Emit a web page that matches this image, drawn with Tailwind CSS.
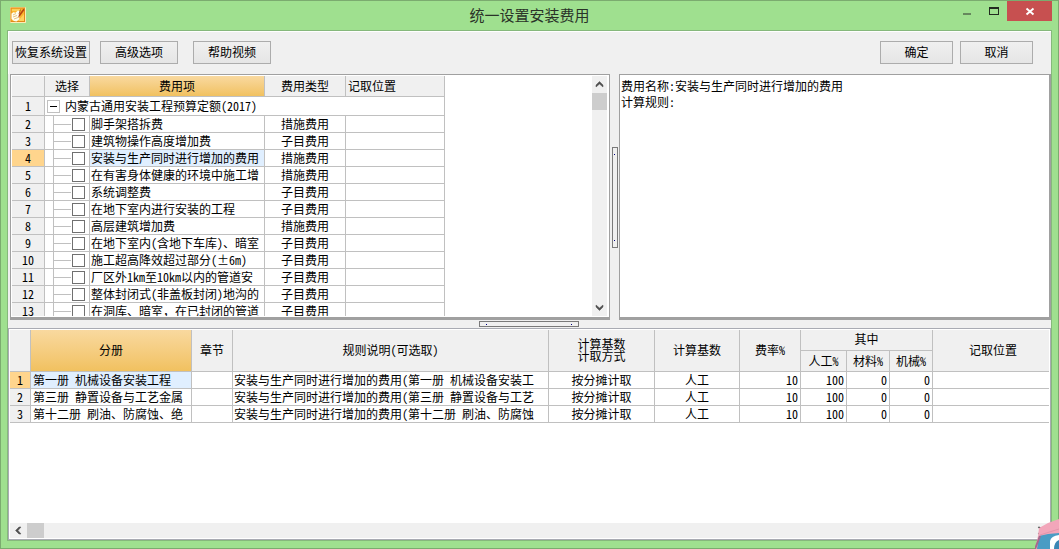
<!DOCTYPE html>
<html lang="zh-CN">
<head>
<meta charset="utf-8">
<meta name="viewport" content="width=device-width, initial-scale=1">
<title>统一设置安装费用</title>
<script src="https://cdn.jsdelivr.net/npm/@tailwindcss/browser@4"></script>
</head>
<body class="h-screen overflow-hidden bg-[#9fe08f] font-['Noto_Sans_Mono_CJK_SC','Noto_Sans_CJK_SC',sans-serif] text-[12px] leading-4 text-black">
<div class="relative flex h-screen flex-col border border-[#7bab6f] px-[6px] pb-[7px]">
  <header class="grid h-[29px] shrink-0 grid-cols-[1fr_auto_1fr] items-start">
    <svg class="mt-1.5 ml-[3px] size-4" viewBox="0 0 16 16" aria-hidden="true">
      <rect width="16" height="16" rx="1" fill="#fbe3a0"/>
      <rect x=".5" y=".5" width="14.500" height="14.500" fill="#e08a1c"/>
      <rect x="1.500" y="1.500" width="12.500" height="12.500" fill="#fbb52c"/>
      <path d="M2 2h9L9 4H2z" fill="#fbd05a"/>
      <path d="M9 13l5-6v7H8z" fill="#ffd25e"/>
      <path d="M1.500 6.500L4 5l1 1 3-2.500 2 1-.5 2.500 1 1-1.500 2 .5 2-3 2.500L4 14l-2.500-2z" fill="#fffdf0"/>
      <path d="M3 8l3-1.500M3 10l4-1.500M4 12l4-1.500" stroke="#d9a650" stroke-width=".7"/>
      <path d="M13.500 1.500L9 7.500 8 11l2.500-2.500L14.500 3z" fill="#b8460f"/>
      <path d="M10.500 2.500L9 7" stroke="#a04010" stroke-width=".8"/>
      <path d="M15.500 1v14.500H1" fill="none" stroke="#fdebb5"/>
    </svg>
    <h1 class="pt-1 text-[15px] leading-5 text-[#2a3328]">统一设置安装费用</h1>
    <div class="flex justify-end">
      <button aria-label="最小化" class="flex h-5 w-[27px] items-center justify-center"><svg class="h-5 w-[27px]" viewBox="0 0 27 20"><path d="M10 12h8v2h-8z" fill="#66885d"/></svg></button>
      <button aria-label="最大化" class="h-5 w-[27px]"><svg class="h-5 w-[27px]" viewBox="0 0 27 20"><path d="M9 6h10v8H9zM10 8v5h8V8z" fill="#222b20" fill-rule="evenodd"/></svg></button>
      <button aria-label="关闭" class="h-5 w-[45px] bg-[#c75050]"><svg class="h-5 w-[45px]" viewBox="0 0 45 20"><path d="M19.500 7.500l7 6M26.500 7.500l-7 6" stroke="#fff" stroke-width="1.900"/></svg></button>
    </div>
  </header>

  <main class="flex min-h-0 flex-1 flex-col border border-[#86b87c] bg-[#f0f0f0]">
    <div class="flex h-[43px] shrink-0 items-start border-t border-l border-white pt-[9px] pr-[18px] pl-[3px]">
      <button class="h-[23px] w-[78px] border border-[#acacac] bg-linear-to-b from-[#f0f0f0] to-[#e5e5e5] pb-0.5 whitespace-nowrap">恢复系统设置</button>
      <button class="ml-2.5 h-[23px] w-[78px] border border-[#acacac] bg-linear-to-b from-[#f0f0f0] to-[#e5e5e5] pb-0.5">高级选项</button>
      <button class="ml-[15px] h-[23px] w-[78px] border border-[#acacac] bg-linear-to-b from-[#f0f0f0] to-[#e5e5e5] pb-0.5">帮助视频</button>
      <button class="ml-auto h-[23px] w-[73px] border border-[#acacac] bg-linear-to-b from-[#f0f0f0] to-[#e5e5e5] pb-0.5">确定</button>
      <button class="ml-[7px] h-[23px] w-[73px] border border-[#acacac] bg-linear-to-b from-[#f0f0f0] to-[#e5e5e5] pb-0.5">取消</button>
    </div>

    <section class="flex h-[246px] shrink-0 pl-0.5">
      <div class="flex w-[600px] shrink-0 border border-b-3 border-[#a0a0a0] bg-white p-px">
        <div class="min-h-0 flex-1 overflow-hidden">
          <table class="table-fixed w-[433px] border-separate border-spacing-0 whitespace-nowrap">
            <colgroup><col class="w-[33px]"><col class="w-[45px]"><col class="w-[175px]"><col class="w-[81px]"><col class="w-[99px]"></colgroup>
            <thead>
              <tr class="h-[21px] bg-[#f0f0f0] *:border-r *:border-b *:border-[#c0c0c0] *:p-0 *:font-normal">
                <th></th><th>选择</th><th class="bg-linear-to-b from-[#f9d99f] to-[#f1c15f]">费用项</th><th>费用类型</th><th class="text-left"><span class="pl-0.5">记取位置</span></th>
              </tr>
            </thead>
            <tbody id="fees">
              <tr class="h-[19px] *:border-r *:border-b *:border-[#c0c0c0] *:p-0">
                <td class="bg-[#f0f0f0] text-center">1</td>
                <td colspan="4"><div class="flex items-center pl-0.5"><button aria-label="折叠" class="flex size-[13px] items-center justify-center border border-[#c0c0c0] bg-white"><span class="h-px w-[7px] bg-black"></span></button><span class="pl-[5px]">内蒙古通用安装工程预算定额(2017)</span></div></td>
              </tr>
            </tbody>
          </table>
        </div>
        <div class="flex w-[15px] flex-col bg-[#f0f0f0]">
          <button aria-label="向上滚动" class="h-[17px]"><svg class="h-[17px] w-[15px]" viewBox="0 0 15 17"><path d="M4 11V9l3.500-3.500L11 9v2L7.500 8z" fill="#505050" stroke="#505050" stroke-width=".5"/></svg></button>
          <div class="h-[17px] bg-[#cdcdcd]"></div>
          <button aria-label="向下滚动" class="mt-auto h-[17px]"><svg class="h-[17px] w-[15px]" viewBox="0 0 15 17"><path d="M4 6v2l3.500 3.500L11 8V6L7.500 9z" fill="#505050" stroke="#505050" stroke-width=".5"/></svg></button>
        </div>
        <div class="w-px bg-white"></div>
      </div>
      <div class="flex w-[9px] shrink-0 items-center justify-center">
        <div class="flex h-[101px] w-[6px] flex-col items-center justify-between border border-[#7a7a7a] bg-[#f0f0f0] py-1.5">
          <span class="size-px bg-[#000080]"></span><span class="size-px bg-[#000080]"></span>
        </div>
      </div>
      <textarea readonly aria-label="费用说明" class="block min-w-0 flex-1 resize-none border border-b-3 border-[#a0a0a0] bg-white py-[3px] pl-px leading-4 outline-none">费用名称:安装与生产同时进行增加的费用
计算规则:</textarea>
      <div class="w-px bg-[#a0a0a0]"></div>
    </section>

    <div class="flex h-2 shrink-0 items-center justify-center pr-0.5">
      <div class="flex h-[6px] w-[100px] items-center justify-between border border-[#7a7a7a] bg-[#f0f0f0] px-1.5"><span class="size-px bg-[#000080]"></span><span class="size-px bg-[#000080]"></span></div>
    </div>

    <section class="flex min-h-0 flex-1 flex-col border border-[#a9abb3] bg-white p-px">
      <div class="min-h-0 flex-1 overflow-hidden">
        <table class="table-fixed w-full border-separate border-spacing-0 whitespace-nowrap">
          <colgroup><col class="w-[21px]"><col class="w-[161px]"><col class="w-[41px]"><col class="w-[316px]"><col class="w-[106px]"><col class="w-[85px]"><col class="w-[61px]"><col class="w-[46px]"><col class="w-[43px]"><col class="w-[43px]"><col></colgroup>
          <thead class="bg-[#f0f0f0]">
            <tr class="h-[21px] *:border-r *:border-b *:border-[#c0c0c0] *:p-0 *:pb-0.5 *:font-normal">
              <th rowspan="2"></th><th rowspan="2" class="bg-linear-to-b from-[#f9d99f] to-[#f1c15f]">分册</th><th rowspan="2">章节</th><th rowspan="2">规则说明(可选取)</th><th rowspan="2" class="leading-3">计算基数<br>计取方式</th><th rowspan="2">计算基数</th><th rowspan="2">费率%</th><th colspan="3">其中</th><th rowspan="2" class="border-r-0! pl-1!">记取位置</th>
            </tr>
            <tr class="h-[21px] *:border-r *:border-b *:border-[#c0c0c0] *:p-0 *:font-normal"><th>人工%</th><th>材料%</th><th>机械%</th></tr>
          </thead>
          <tbody id="rules"></tbody>
        </table>
      </div>
      <div class="flex h-[15px] shrink-0 bg-[#f0f0f0]">
        <button aria-label="向左滚动" class="w-[17px]"><svg class="h-[15px] w-[17px]" viewBox="0 0 17 15"><path d="M11 4H9L5.500 7.500 9 11h2L8 7.500z" fill="#505050" stroke="#505050" stroke-width=".5"/></svg></button>
        <div class="w-[17px] bg-[#cdcdcd]"></div>
        <button aria-label="向右滚动" class="ml-auto w-[17px]"><svg class="h-[15px] w-[17px]" viewBox="0 0 17 15"><path d="M6 4h2l3.500 3.500L8 11H6l3-3.500z" fill="#505050" stroke="#505050" stroke-width=".5"/></svg></button>
      </div>
    </section>
  </main>

  <svg class="absolute -right-px -bottom-px h-8 w-6" viewBox="0 0 24 32" aria-hidden="true">
    <path d="M3 19L4 11 13 6 24 2V32H0z" fill="#f2a6ba"/>
    <path d="M5 18L24 12" stroke="#e295ab" stroke-width="1"/>
    <path d="M2 32L4 19 13 17 24 16V32z" fill="#4a9cc4"/>
    <path d="M0 32L5 19" stroke="#a8688c" stroke-width="2"/>
    <path d="M15 32V24Q16 19 24 18V32z" fill="#fff"/><path d="M19 32Q19 25 24 23V32z" fill="#3a86b4"/>
  </svg>
</div>

<template id="fee-row">
  <tr class="h-[17px] *:border-r *:border-b *:border-[#c0c0c0] *:p-0">
    <td class="bg-[#f0f0f0] text-center"></td>
    <td><div class="flex h-4 pl-2"><span class="w-px bg-[#c0c0c0] -mb-px"></span><span class="mt-2 h-px w-[17px] bg-[#c0c0c0]"></span><input type="checkbox" class="mt-[2px] ml-px block size-[13px] appearance-none border border-[#707070] bg-white"></div></td>
    <td class="overflow-hidden"><div class="h-4 pl-px leading-4"></div></td>
    <td class="text-center"><div class="h-4 leading-4"></div></td>
    <td></td>
  </tr>
</template>
<template id="rule-row">
  <tr class="h-[17px] *:h-[17px] *:border-r *:border-b *:border-[#c0c0c0] *:p-0 *:leading-4">
    <td class="bg-[#f0f0f0] text-center"></td><td class="overflow-hidden"><span class="pl-0.5"></span></td><td></td><td class="overflow-hidden"><span class="pl-px"></span></td>
    <td class="text-center">按分摊计取</td><td class="text-center">人工</td>
    <td class="text-right"><span class="pr-0.5">10</span></td><td class="text-right"><span class="pr-0.5">100</span></td><td class="text-right"><span class="pr-0.5">0</span></td><td class="text-right"><span class="pr-0.5">0</span></td><td class="border-r-0!"></td>
  </tr>
</template>
<script>
const fees = [
  ['脚手架搭拆费', '措施费用'], ['建筑物操作高度增加费', '子目费用'], ['安装与生产同时进行增加的费用', '措施费用'],
  ['在有害身体健康的环境中施工增', '措施费用'], ['系统调整费', '子目费用'], ['在地下室内进行安装的工程', '子目费用'],
  ['高层建筑增加费', '措施费用'], ['在地下室内(含地下车库)、暗室', '子目费用'], ['施工超高降效超过部分(±6m)', '子目费用'],
  ['厂区外1km至10km以内的管道安', '子目费用'], ['整体封闭式(非盖板封闭)地沟的', '子目费用'], ['在洞库、暗室，在已封闭的管道', '子目费用']
];
fees.forEach(([name, type], i) => {
  const row = document.getElementById('fee-row').content.cloneNode(true);
  const td = row.querySelectorAll('td');
  td[0].textContent = i + 2;
  td[1].querySelector('input').setAttribute('aria-label', name);
  td[2].firstChild.textContent = name;
  td[3].firstChild.textContent = type;
  if (i === 2) {
    td[0].classList.replace('bg-[#f0f0f0]', 'bg-[#ffd58d]');
    td[2].classList.add('bg-[#e0efff]');
  }
  document.getElementById('fees').append(row);
});
const rules = [
  ['第一册 机械设备安装工程', '安装与生产同时进行增加的费用(第一册 机械设备安装工'],
  ['第三册 静置设备与工艺金属', '安装与生产同时进行增加的费用(第三册 静置设备与工艺'],
  ['第十二册 刷油、防腐蚀、绝', '安装与生产同时进行增加的费用(第十二册 刷油、防腐蚀']
];
rules.forEach(([book, text], i) => {
  const row = document.getElementById('rule-row').content.cloneNode(true);
  const td = row.querySelectorAll('td');
  td[0].textContent = i + 1;
  td[1].firstChild.textContent = book;
  td[3].firstChild.textContent = text;
  if (i === 0) {
    td[0].classList.replace('bg-[#f0f0f0]', 'bg-[#ffd58d]');
    td[1].classList.add('bg-[#e0efff]');
  }
  document.getElementById('rules').append(row);
});
</script>
</body>
</html>
